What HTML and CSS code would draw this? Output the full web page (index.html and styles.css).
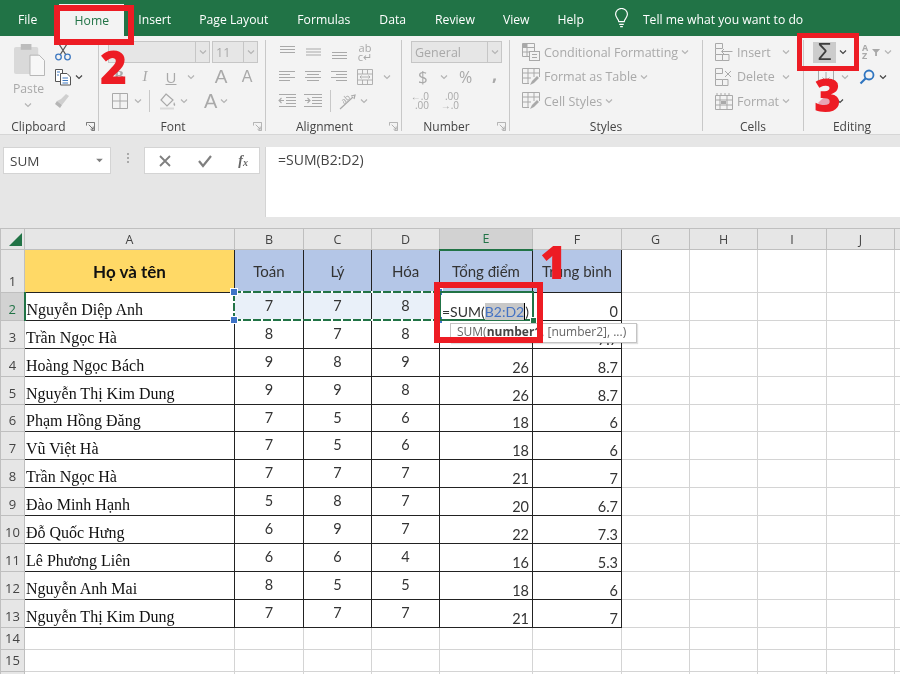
FILE: index.html
```html
<!DOCTYPE html>
<html lang="vi">
<head>
<meta charset="utf-8">
<title>Excel SUM</title>
<link rel="stylesheet" href="styles.css">
</head>
<body>
<svg class="defs" width="0" height="0">
  <symbol id="chev" viewBox="0 0 10 10"><polyline points="2,3.5 5,6.5 8,3.5" fill="none" stroke="currentColor" stroke-width="1.2"/></symbol>
  <symbol id="launch" viewBox="0 0 10 10"><path d="M.5 4V.5H9.5V9.5H6M3 3L8 8M8 5V8H5" fill="none" stroke="currentColor"/></symbol>
  <symbol id="top" viewBox="0 0 16 16"><path d="M1 2.5H16M1 5.5H16M1 8.5H16" stroke="currentColor"/></symbol>
  <symbol id="mid" viewBox="0 0 16 16"><path d="M1 5H16M1 8H16M1 11H16" stroke="currentColor"/></symbol>
  <symbol id="bot" viewBox="0 0 16 16"><path d="M1 8.5H16M1 11.5H16M1 14.5H16" stroke="currentColor"/></symbol>
  <symbol id="left" viewBox="0 0 16 16"><path d="M0 2.5H16M0 5.5H11M0 8.5H16M0 11.5H11" stroke="currentColor"/></symbol>
  <symbol id="center" viewBox="0 0 16 16"><path d="M0 2.5H16M2 5.5H14M0 8.5H16M2 11.5H14" stroke="currentColor"/></symbol>
  <symbol id="right" viewBox="0 0 16 16"><path d="M0 2.5H16M5 5.5H16M0 8.5H16M5 11.5H16" stroke="currentColor"/></symbol>
  <symbol id="outd" viewBox="0 0 18 16"><path d="M1 1.5H18M8 4.5H18M8 7.5H18M8 10.5H18M1 13.5H18M6 7.5H1M3.5 5L1 7.5L3.5 10" fill="none" stroke="currentColor" stroke-width="1.1"/></symbol>
  <symbol id="ind" viewBox="0 0 18 16"><path d="M0 1.5H18M8 4.5H18M8 7.5H18M8 10.5H18M0 13.5H18M1 7.5H6M3.5 5L6 7.5L3.5 10" fill="none" stroke="currentColor" stroke-width="1.1"/></symbol>
  <symbol id="merge" viewBox="0 0 16 16"><path d="M.5.5H15.5V15.5H.5ZM.5 5H15.5M.5 11H15.5M5.5.5V5M10.5.5V5M5.5 11V15.5M10.5 11V15.5M3 8H13M4.5 6.5L3 8L4.5 9.5M11.5 6.5L13 8L11.5 9.5" fill="none" stroke="currentColor" stroke-width=".9"/></symbol>
  <symbol id="cond" viewBox="0 0 18 18"><path d="M.5.5H12.5V13.5H.5ZM.5 4.5H12.5M.5 9H8M5 .5V13.5" fill="none" stroke="currentColor"/><rect x="7.5" y="8.5" width="10" height="9" fill="#f3f3f3" stroke="currentColor"/><path d="M10 11.5H15M10 14.5H15" stroke="currentColor"/><rect x="1" y="1" width="4" height="3" fill="currentColor"/></symbol>
  <symbol id="fmt" viewBox="0 0 18 18"><path d="M.5.5H17.5V9M.5.5V15.5H7M.5 5H17.5M.5 10H9M6 .5V15M12 .5V9" fill="none" stroke="currentColor"/><path d="M8 17L10 13L15 8L17 10L12 15Z" fill="currentColor"/></symbol>
  <symbol id="cins" viewBox="0 0 18 18"><path d="M.5.5H7.5V5.5H.5ZM.5 11.5H7.5V17.5H.5ZM7.5 11.5H14V17.5H7.5ZM.5 5.5V11.5M7 8.5H17.5M9 6L6.5 8.5L9 11" fill="none" stroke="currentColor"/></symbol>
  <symbol id="cdel" viewBox="0 0 18 18"><path d="M.5.5H7.5V5.5H.5ZM.5 5.5V11.5H7.5M.5 11.5V17.5H7.5V11.5M7.5 11.5H13V17.5H7.5M10 3L16 9M16 3L10 9" fill="none" stroke="currentColor"/></symbol>
  <symbol id="cfmt" viewBox="0 0 18 18"><path d="M.5 3.5H17.5V17.5H.5ZM.5 8H17.5M.5 13H17.5M5 3.5V17.5M12 3.5V17.5M2 1V3M6 1V3M10 1V3M14 1V3" fill="none" stroke="currentColor"/><rect x="6" y="9" width="5" height="3" fill="currentColor"/></symbol>
</svg>

<nav class="tabs">
  <span class="tab">File</span>
  <span class="tab home">Home</span>
  <span class="tab t-insert">Insert</span>
  <span class="tab t-layout">Page Layout</span>
  <span class="tab t-form">Formulas</span>
  <span class="tab t-data">Data</span>
  <span class="tab t-rev">Review</span>
  <span class="tab t-view">View</span>
  <span class="tab t-help">Help</span>
  <svg class="bulb" viewBox="0 0 16 22"><path d="M5 15C5 12 1.500 11 1.500 7A6.500 6.500 0 0 1 14.500 7C14.500 11 11 12 11 15ZM5.500 18H10.500M6.500 20.500H9.500" fill="none" stroke="#fff" stroke-width="1.300"/></svg>
  <span class="tell">Tell me what you want to do</span>
</nav>

<section class="ribbon">
  <div class="group g-clip">
    <div class="clip-body">
      <div class="paste">
        <svg class="paste-ic" viewBox="0 0 32 33"><rect x="0" y="3" width="25" height="28" rx="2" fill="#d9d9d9"/><rect x="7" y="0" width="11" height="6" fill="#bdbdbd"/><path d="M16.500 11.500H26L31.500 17V32.500H16.500Z" fill="#f7f7f7" stroke="#b5b5b5"/></svg>
        <span class="paste-t">Paste</span>
        <svg class="ch"><use href="#chev"/></svg>
      </div>
      <div class="clip-col">
        <div class="row">
          <svg class="ic18" viewBox="0 0 18 18"><path d="M5 1L12 12M13 1L6 12" stroke="#555" stroke-width="1.300"/><circle cx="4.500" cy="14" r="2.800" fill="none" stroke="#3f79c0" stroke-width="1.300"/><circle cx="13.500" cy="14" r="2.800" fill="none" stroke="#3f79c0" stroke-width="1.300"/></svg>
        </div>
        <div class="row">
          <svg class="ic18" viewBox="0 0 18 18"><path d="M1.500 1.500H8.500V13.500H1.500Z" fill="#fff" stroke="#555"/><path d="M6.500 5.500H13L16.500 9V17H6.500Z" fill="#fff" stroke="#555"/><path d="M3 4H6M3 7H5M8.500 10H14M8.500 12.500H14M8.500 15H14" stroke="#3f79c0"/></svg>
          <svg class="ch dark"><use href="#chev"/></svg>
        </div>
        <div class="row">
          <svg class="ic18" viewBox="0 0 18 18"><path d="M3 9L8 13L15 4L12 2L7 7Z" fill="#cfcfcf"/><path d="M3 9L8 13L6 16L1 12Z" fill="#b5b5b5"/></svg>
        </div>
      </div>
    </div>
    <div class="label">Clipboard</div>
    <svg class="launch dark"><use href="#launch"/></svg>
  </div>

  <div class="group g-font">
    <div class="rows">
      <div class="row">
        <div class="combo c-font"><span class="val"></span><i class="drop"><svg class="ch"><use href="#chev"/></svg></i></div>
        <div class="combo c-size"><span class="val">11</span><i class="drop"><svg class="ch"><use href="#chev"/></svg></i></div>
      </div>
      <div class="row">
        <b class="c26 gl serif">B</b>
        <i class="c26 gl serif">I</i>
        <u class="c26 gl">U</u>
        <svg class="ch"><use href="#chev"/></svg>
        <span class="c26 gl big s10">A</span>
        <span class="c26 gl mid-a">A</span>
      </div>
      <div class="row">
        <svg class="ic16 b-ic" viewBox="0 0 16 16"><path d="M.5.5H15.500V15.500H.5ZM8 .5V15.500M.5 8H15.500" fill="none" stroke="currentColor"/></svg>
        <svg class="ch"><use href="#chev"/></svg>
        <span class="vsep"></span>
        <svg class="ic18 s-fill" viewBox="0 0 18 18"><path d="M7 2L14 8L8 14L2 8Z" fill="none" stroke="currentColor" stroke-width="1.200"/><path d="M15 10C16 12 17 13 15.500 14C14 13 14.500 12 15 10Z" fill="currentColor"/><rect x="1" y="15.500" width="14" height="2" fill="#d9d9d9"/></svg>
        <svg class="ch"><use href="#chev"/></svg>
        <span class="gl big-a">A</span>
        <svg class="ch"><use href="#chev"/></svg>
      </div>
    </div>
    <div class="label">Font</div>
    <svg class="launch"><use href="#launch"/></svg>
  </div>

  <div class="group g-align">
    <div class="rows">
      <div class="row">
        <span class="c26"><svg class="ic16"><use href="#top"/></svg></span>
        <span class="c26"><svg class="ic16"><use href="#mid"/></svg></span>
        <span class="c26"><svg class="ic16"><use href="#bot"/></svg></span>
        <span class="c26 wrap">ab<br>c↵</span>
      </div>
      <div class="row">
        <span class="c26"><svg class="ic16"><use href="#left"/></svg></span>
        <span class="c26"><svg class="ic16"><use href="#center"/></svg></span>
        <span class="c26"><svg class="ic16"><use href="#right"/></svg></span>
        <span class="c26"><svg class="ic16"><use href="#merge"/></svg></span>
        <svg class="ch s3"><use href="#chev"/></svg>
      </div>
      <div class="row">
        <span class="c26"><svg class="ic18"><use href="#outd"/></svg></span>
        <span class="c26"><svg class="ic18"><use href="#ind"/></svg></span>
        <span class="vsep short"></span>
        <svg class="ic18 s-or" viewBox="0 0 18 18"><path d="M1 17L14 5M12 4L16 3L15 7" fill="none" stroke="currentColor" stroke-width="1.200"/><text x="2" y="11" class="or-t" transform="rotate(-40 5 8)">ab</text></svg>
        <svg class="ch"><use href="#chev"/></svg>
      </div>
    </div>
    <div class="label">Alignment</div>
    <svg class="launch"><use href="#launch"/></svg>
  </div>

  <div class="group g-num">
    <div class="rows">
      <div class="row">
        <div class="combo c-gen"><span class="val">General</span><i class="drop"><svg class="ch"><use href="#chev"/></svg></i></div>
      </div>
      <div class="row">
        <span class="dollar">$</span>
        <svg class="ch"><use href="#chev"/></svg>
        <span class="pct">%</span>
        <span class="comma">,</span>
      </div>
      <div class="row">
        <span class="dec">←.0<br>.00</span>
        <span class="dec d2">.00<br>→.0</span>
      </div>
    </div>
    <div class="label">Number</div>
    <svg class="launch"><use href="#launch"/></svg>
  </div>

  <div class="group g-styles">
    <div class="rows">
      <div class="row lab"><svg class="ic18"><use href="#cond"/></svg><span>Conditional Formatting</span><svg class="ch"><use href="#chev"/></svg></div>
      <div class="row lab"><svg class="ic18"><use href="#fmt"/></svg><span>Format as Table</span><svg class="ch"><use href="#chev"/></svg></div>
      <div class="row lab"><svg class="ic18"><use href="#fmt"/></svg><span>Cell Styles</span><svg class="ch"><use href="#chev"/></svg></div>
    </div>
    <div class="label">Styles</div>
  </div>

  <div class="group g-cells">
    <div class="rows">
      <div class="row lab"><svg class="ic18"><use href="#cins"/></svg><span class="cw">Insert</span><svg class="ch"><use href="#chev"/></svg></div>
      <div class="row lab"><svg class="ic18"><use href="#cdel"/></svg><span class="cw">Delete</span><svg class="ch"><use href="#chev"/></svg></div>
      <div class="row lab"><svg class="ic18"><use href="#cfmt"/></svg><span class="cw">Format</span><svg class="ch"><use href="#chev"/></svg></div>
    </div>
    <div class="label">Cells</div>
  </div>

  <div class="group g-edit">
    <div class="rows">
      <div class="row">
        <span class="sigma">Σ</span>
        <svg class="ch dark"><use href="#chev"/></svg>
        <span class="sort">A<br>Z</span>
        <svg class="ic10" viewBox="0 0 10 10"><path d="M0 1H9L5.500 5V9H3.500V5Z" fill="#a8a8a8"/></svg>
        <svg class="ch"><use href="#chev"/></svg>
      </div>
      <div class="row">
        <svg class="ic16 e-fill" viewBox="0 0 16 16"><path d="M.5.5H15.500V15.500H.5ZM8 3V12M4.500 8.500L8 12L11.500 8.500" fill="none" stroke="#a8a8a8"/></svg>
        <svg class="ch"><use href="#chev"/></svg>
        <svg class="ic16 e-find" viewBox="0 0 16 16"><circle cx="10" cy="6" r="4.500" fill="none" stroke="#2f75c0" stroke-width="1.800"/><path d="M7 9L1.500 14.500" stroke="#2f75c0" stroke-width="2.200"/></svg>
        <svg class="ch dark"><use href="#chev"/></svg>
      </div>
      <div class="row">
        <svg class="ic16 e-clear" viewBox="0 0 16 16"><path d="M1 10L8 3L14 8L9 14H4Z" fill="#e7a6b4"/></svg>
        <svg class="ch dark"><use href="#chev"/></svg>
      </div>
    </div>
    <div class="label">Editing</div>
  </div>
</section>

<section class="fbar">
  <div class="namebox"><span>SUM</span><svg class="caret" viewBox="0 0 10 6"><path d="M1 1H9L5 5Z" fill="#7f7f7f"/></svg></div>
  <div class="grip"><i></i><i></i><i></i></div>
  <div class="fbtns">
    <svg class="ic14" viewBox="0 0 14 14"><path d="M2 2L12 12M12 2L2 12" stroke="#7f7f7f" stroke-width="1.800"/></svg>
    <svg class="ic14" viewBox="0 0 14 14"><path d="M1 7L5 12L13 2" fill="none" stroke="#7f7f7f" stroke-width="2.200"/></svg>
    <span class="fx">f<sub>x</sub></span>
  </div>
  <div class="finput">=SUM(B2:D2)</div>
</section>

<section class="sheet">
  <table class="grid">
    <colgroup>
      <col class="w-h"><col class="w-a"><col class="w-b"><col class="w-c"><col class="w-c"><col class="w-e"><col class="w-f"><col class="w-c"><col class="w-c"><col class="w-b"><col class="w-c"><col class="w-k">
    </colgroup>
    <tr class="r-head">
      <th class="corner"><svg class="tri" viewBox="0 0 13 13"><path d="M13 0V13H0Z" fill="#217346"/></svg></th>
      <th>A</th><th>B</th><th>C</th><th>D</th><th class="sel-col">E</th><th>F</th><th>G</th><th>H</th><th>I</th><th>J</th><th></th>
    </tr>
    <tr class="r-1">
      <th class="rn">1</th>
      <td class="name-h x">Họ và tên</td><td class="sub x">Toán</td><td class="sub x">Lý</td><td class="sub x">Hóa</td><td class="sub x">Tổng điểm</td><td class="sub x">Trung bình</td><td></td><td></td><td></td><td></td><td></td>
    </tr>
    <tr class="r-d">
      <th class="rn sel-row">2</th>
      <td class="nm x">Nguyễn Diệp Anh</td><td class="v x rng">7</td><td class="v x rng">7</td><td class="v x rng">8</td><td class="t x f2">=SUM(<span class="hl">B2:D2</span><span class="cur">)</span></td><td class="t x">0</td><td></td><td></td><td></td><td></td><td></td>
    </tr>
    <tr class="r-d"><th class="rn">3</th><td class="nm x">Trần Ngọc Hà</td><td class="v x">8</td><td class="v x">7</td><td class="v x">8</td><td class="t x"></td><td class="t x">7.7</td><td></td><td></td><td></td><td></td><td></td></tr>
    <tr class="r-d"><th class="rn">4</th><td class="nm x">Hoàng Ngọc Bách</td><td class="v x">9</td><td class="v x">8</td><td class="v x">9</td><td class="t x">26</td><td class="t x">8.7</td><td></td><td></td><td></td><td></td><td></td></tr>
    <tr class="r-d"><th class="rn">5</th><td class="nm x">Nguyễn Thị Kim Dung</td><td class="v x">9</td><td class="v x">9</td><td class="v x">8</td><td class="t x">26</td><td class="t x">8.7</td><td></td><td></td><td></td><td></td><td></td></tr>
    <tr class="r-d"><th class="rn">6</th><td class="nm x">Phạm Hồng Đăng</td><td class="v x">7</td><td class="v x">5</td><td class="v x">6</td><td class="t x">18</td><td class="t x">6</td><td></td><td></td><td></td><td></td><td></td></tr>
    <tr class="r-d"><th class="rn">7</th><td class="nm x">Vũ Việt Hà</td><td class="v x">7</td><td class="v x">5</td><td class="v x">6</td><td class="t x">18</td><td class="t x">6</td><td></td><td></td><td></td><td></td><td></td></tr>
    <tr class="r-d"><th class="rn">8</th><td class="nm x">Trần Ngọc Hà</td><td class="v x">7</td><td class="v x">7</td><td class="v x">7</td><td class="t x">21</td><td class="t x">7</td><td></td><td></td><td></td><td></td><td></td></tr>
    <tr class="r-d"><th class="rn">9</th><td class="nm x">Đào Minh Hạnh</td><td class="v x">5</td><td class="v x">8</td><td class="v x">7</td><td class="t x">20</td><td class="t x">6.7</td><td></td><td></td><td></td><td></td><td></td></tr>
    <tr class="r-d"><th class="rn">10</th><td class="nm x">Đỗ Quốc Hưng</td><td class="v x">6</td><td class="v x">9</td><td class="v x">7</td><td class="t x">22</td><td class="t x">7.3</td><td></td><td></td><td></td><td></td><td></td></tr>
    <tr class="r-d"><th class="rn">11</th><td class="nm x">Lê Phương Liên</td><td class="v x">6</td><td class="v x">6</td><td class="v x">4</td><td class="t x">16</td><td class="t x">5.3</td><td></td><td></td><td></td><td></td><td></td></tr>
    <tr class="r-d"><th class="rn">12</th><td class="nm x">Nguyễn Anh Mai</td><td class="v x">8</td><td class="v x">5</td><td class="v x">5</td><td class="t x">18</td><td class="t x">6</td><td></td><td></td><td></td><td></td><td></td></tr>
    <tr class="r-d"><th class="rn">13</th><td class="nm x">Nguyễn Thị Kim Dung</td><td class="v x">7</td><td class="v x">7</td><td class="v x">7</td><td class="t x">21</td><td class="t x">7</td><td></td><td></td><td></td><td></td><td></td></tr>
    <tr class="r-e"><th class="rn">14</th><td></td><td></td><td></td><td></td><td></td><td></td><td></td><td></td><td></td><td></td><td></td></tr>
    <tr class="r-e"><th class="rn">15</th><td></td><td></td><td></td><td></td><td></td><td></td><td></td><td></td><td></td><td></td><td></td></tr>
    <tr class="r-e"><th class="rn"></th><td></td><td></td><td></td><td></td><td></td><td></td><td></td><td></td><td></td><td></td><td></td></tr>
  </table>
</section>

<div class="ants"></div>
<i class="hnd h1"></i><i class="hnd h2"></i><i class="hnd h3"></i><i class="hnd h4"></i>
<div class="active"></div>
<i class="fill-h"></i>
<div class="tip">SUM(<b>number1</b>, [number2], ...)</div>

<div class="mark m-home"></div>
<div class="mark m-sum"></div>
<div class="mark m-cell"></div>
<span class="num n1">1</span>
<span class="num n2">2</span>
<span class="num n3">3</span>
</body>
</html>
```

FILE: styles.css
```css
* { box-sizing: border-box; }
html, body { margin: 0; height: 100%; }
body {
  position: relative;
  width: 900px;
  height: 674px;
  overflow: hidden;
  background: #fff;
  font-family: "Open Sans", "Noto Sans", sans-serif;
  color: #444;
  filter: blur(.4px);
}
.defs { position: absolute; }

/* Tabs */
.tabs {
  height: 36px;
  background: #217346;
  display: flex;
  align-items: center;
  color: #fff;
  font-size: 12.2px;
  padding-left: 18px;
}
.tab { flex: none; position: relative; top: 1px; }
.home {
  margin-left: 22px;
  background: #f3f3f3;
  color: #217346;
  align-self: stretch;
  width: 65px;
  margin-top: 4px;
  margin-bottom: -1px;
  top: 0;
  display: flex;
  align-items: center;
  justify-content: center;
}
.t-insert { margin-left: 14px; }
.t-layout { margin-left: 28px; }
.t-form { margin-left: 29px; }
.t-data { margin-left: 29px; }
.t-rev { margin-left: 29px; }
.t-view { margin-left: 28px; }
.t-help { margin-left: 28px; }
.bulb { width: 15px; height: 20px; margin-left: 30px; flex: none; }
.tell { margin-left: 14px; flex: none; position: relative; top: 1px; }

/* Ribbon */
.ribbon {
  height: 99px;
  background: #f3f3f3;
  display: flex;
  align-items: flex-start;
  padding-top: 4px;
  color: #a9a9a9;
  border-bottom: 1px solid #d6d6d6;
}
.group {
  position: relative;
  height: 91px;
  border-right: 1px solid #c8c8c8;
  flex: none;
}
.g-clip { width: 99px; }
.g-font { width: 167px; padding-left: 7px; }
.g-align { width: 136px; padding-left: 8px; }
.g-num { width: 108px; padding-left: 9px; }
.g-styles { width: 193px; padding-left: 12px; }
.g-cells { width: 101px; padding-left: 12px; }
.g-edit { width: 96px; border-right: 0; padding-left: 9px; }
.rows, .clip-col { display: grid; grid-template-rows: repeat(3, 24.5px); }
.row { display: flex; align-items: center; }
.label {
  position: absolute;
  left: 0; right: 0; top: 79px;
  height: 16px;
  line-height: 16px;
  text-align: center;
  font-size: 12px;
  color: #444;
}
.launch {
  position: absolute;
  right: 3px; top: 82px;
  width: 9px; height: 9px;
  color: #a9a9a9;
}
.launch.dark { color: #666; }
.g-clip .label { right: 21px; }
.g-font .label, .g-align .label, .g-num .label { right: 18px; }
.ch { width: 10px; height: 10px; flex: none; color: #b4b4b4; margin: 0 2px; }
.ch.dark { color: #444; }
.ic10 { width: 9px; height: 9px; flex: none; }
.ic14 { width: 14px; height: 14px; flex: none; }
.ic16 { width: 16px; height: 16px; flex: none; }
.ic18 { width: 18px; height: 18px; flex: none; }
.c26 {
  width: 26px; height: 24px; flex: none;
  display: flex; align-items: center; justify-content: center;
}
.vsep { width: 1px; height: 22px; background: #c8c8c8; flex: none; margin-left: 4px; }

/* Clipboard */
.clip-body { display: flex; }
.paste {
  width: 55px;
  padding-left: 13px;
  display: flex;
  flex-direction: column;
}
.paste-ic { width: 31px; height: 32px; margin-top: 4px; margin-left: 1px; }
.paste-t { font-size: 12.2px; line-height: 16px; margin-top: 5px; width: 32px; }
.paste .ch { margin: 3px 0 0 10px; }
.clip-col { margin-left: -1px; }

/* Font */
.combo {
  display: flex;
  height: 22px;
  border: 1px solid #c6c6c6;
  background: #e6e6e6;
  flex: none;
  font-size: 12.5px;
  color: #a9a9a9;
  align-items: center;
}
.combo .val { flex: 1; padding-left: 3px; white-space: nowrap; }
.drop {
  width: 14px; height: 100%;
  border-left: 1px solid #c6c6c6;
  display: flex; align-items: center; justify-content: center;
  flex: none;
}
.drop .ch { margin: 0; }
.c-font { width: 102px; margin-left: 2px; }
.c-size { width: 46px; margin-left: 2px; }
.gl { font-size: 15px; color: #a9a9a9; }
.serif { font-family: "Liberation Serif", serif; }
.big { font-size: 19px; font-family: "Liberation Sans", sans-serif; }
.mid-a { font-size: 16px; font-family: "Liberation Sans", sans-serif; }
.s10 { margin-left: 10px; }
.b-ic { margin-left: 6px; color: #a9a9a9; }
.b-ic + .ch { margin-left: 5px; }
.s-fill { margin-left: 9px; color: #a9a9a9; }
.big-a { font-size: 20px; margin-left: 13px; font-family: "Liberation Sans", sans-serif; }
.s3 { margin-left: 4px; }

/* Alignment */
.g-align .c26 { color: #a9a9a9; }
.wrap { font-size: 11px; line-height: 9px; text-align: center; display: block; padding-top: 3px; }
.short { margin: 0 0 0 4px; }
.s-or { margin-left: 8px; color: #a9a9a9; overflow: visible; }
.or-t { font-size: 8px; fill: #a9a9a9; font-family: "Open Sans", sans-serif; }

/* Number */
.c-gen { width: 91px; font-size: 12.5px; }
.dollar { font-size: 17px; margin-left: 7px; width: 19px; }
.pct { font-size: 16px; margin-left: 8px; width: 22px; }
.comma { font-size: 18px; font-weight: 700; margin-left: 11px; position: relative; top: -3px; }
.dec { font-size: 10px; line-height: 9px; margin-left: -3px; text-align: right; width: 21px; }
.d2 { margin-left: 9px; }

/* Styles / Cells */
.lab { font-size: 12.5px; white-space: nowrap; }
.lab .ic18 { margin-right: 4px; color: #a9a9a9; }
.cw { width: 42px; }

/* Editing */
.sigma {
  width: 23px; height: 21px;
  background: #ccc;
  color: #3d3d3d;
  font-size: 23px;
  line-height: 21px;
  text-align: center;
  font-family: "Liberation Sans", sans-serif;
  flex: none;
}
.sort { font-size: 9px; line-height: 8px; margin-left: 12px; font-weight: 700; width: 10px; }
.e-fill { margin-left: 5px; }
.e-fill + .ch { margin-left: 6px; }
.e-find { margin-left: 7px; }
.e-find + .ch { margin-left: 3px; }
.e-clear { margin-left: 4px; }

/* Formula bar */
.fbar {
  height: 93px;
  background: #e6e6e6;
  display: flex;
  align-items: flex-start;
  padding-top: 12px;
}
.namebox {
  width: 108px; height: 27px;
  margin-left: 3px;
  background: #fff;
  border: 1px solid #d4d4d4;
  display: flex; align-items: center; justify-content: space-between;
  padding: 0 6px;
  font-size: 13.5px;
  color: #444;
}
.caret { width: 9px; height: 5px; }
.grip { width: 33px; padding-top: 6px; display: flex; flex-direction: column; align-items: center; gap: 2px; }
.grip i { width: 2px; height: 2px; background: #aaa; }
.fbtns {
  width: 116px; height: 27px;
  background: #fff;
  border: 1px solid #d4d4d4;
  display: flex; align-items: center; justify-content: space-between;
  padding: 0 11px 0 13px;
}
.fx { font-family: "Liberation Serif", serif; font-style: italic; font-size: 14px; font-weight: 700; color: #666; }
.fx sub { font-size: 10px; vertical-align: -1px; }
.finput {
  flex: 1;
  height: 70px;
  margin-left: 5px;
  background: #fff;
  border-left: 1px solid #d4d4d4;
  padding: 1px 0 0 12px;
  font-size: 14px;
  line-height: 24px;
  color: #444;
}

/* Sheet */
.sheet { height: 446px; overflow: hidden; background: #fff; }
.grid {
  border-collapse: collapse;
  table-layout: fixed;
  width: 900px;
  font-family: Lato, "Open Sans", sans-serif;
  font-size: 14.5px;
  color: #333;
}
.w-h { width: 24px; } .w-a { width: 210px; } .w-b { width: 69px; } .w-c { width: 68px; }
.w-e { width: 93px; } .w-f { width: 89px; } .w-k { width: 6px; }
.grid th {
  background: #e6e6e6;
  font-weight: 400;
  font-family: "Open Sans", sans-serif;
  font-size: 12.5px;
  color: #444;
  padding: 0;
  border: 1px solid #bfbfbf;
  overflow: hidden;
}
.grid td {
  border: 1px solid #d4d4d4;
  padding: 0 3px;
  white-space: nowrap;
  overflow: hidden;
}
.r-head { height: 21px; }
.r-1 { height: 43px; }
.r-d { height: 27.9px; }
.r-e { height: 21px; }
.corner { position: relative; }
.tri { position: absolute; left: 8px; bottom: 3px; width: 13px; height: 13px; }
.grid .rn { vertical-align: bottom; line-height: 21px; font-size: 13px; }
.grid .sel-col { background: #d2d2d2; color: #217346; border-bottom: 2px solid #217346; }
.grid .sel-row { background: #d2d2d2; color: #217346; border-right: 2px solid #217346; }
.grid td.x { border: 1.5px solid #222; }
.grid td.name-h { background: #ffd966; font-weight: 700; text-align: center; font-size: 17px; color: #111; }
.sub { background: #b4c6e7; text-align: center; font-size: 15px; }
.grid td.nm { font-family: "Liberation Serif", serif; font-size: 16px; vertical-align: bottom; color: #111; line-height: 19px; padding: 0 0 1px 1px; }
.grid td.v { text-align: center; vertical-align: middle; padding-bottom: 2px; }
.t { text-align: right; vertical-align: bottom; }
.rng { background: #e9f0f9; }
.grid td.f2 { padding-left: 2px; text-align: left; font-size: 14px; position: relative; z-index: 1; }
.hl { background: #c8c8c8; color: #4472c4; }
.cur { border-left: 1px solid #000; }

/* Overlays */
.ants {
  position: absolute;
  left: 233px; top: 291px;
  width: 207px; height: 30px;
  background:
    repeating-linear-gradient(90deg, #217346 0 8px, #fff 8px 10px) left top / 100% 2px no-repeat,
    repeating-linear-gradient(90deg, #217346 0 8px, #fff 8px 10px) left bottom / 100% 2px no-repeat,
    repeating-linear-gradient(0deg, #217346 0 8px, #fff 8px 10px) left top / 2px 100% no-repeat,
    repeating-linear-gradient(0deg, #217346 0 8px, #fff 8px 10px) right top / 2px 100% no-repeat;
}
.hnd { position: absolute; width: 8px; height: 8px; background: #3f74c8; border: 1px solid #fff; }
.h1 { left: 230px; top: 288px; }
.h2 { left: 230px; top: 316px; }
.h3 { left: 435px; top: 288px; }
.h4 { left: 435px; top: 316px; }
.active { position: absolute; left: 439px; top: 291px; width: 95px; height: 30px; border: 2px solid #217346; }
.fill-h { position: absolute; left: 530px; top: 317px; width: 7px; height: 7px; background: #217346; border: 1px solid #fff; }
.tip {
  position: absolute;
  left: 450px; top: 323px;
  width: 187px; height: 20px;
  background: #fff;
  border: 1px solid #c4c4c4;
  box-shadow: 1px 1px 1px rgba(0,0,0,.12);
  font-size: 12px;
  line-height: 15px;
  padding-left: 6px;
  color: #666;
  white-space: nowrap;
}
.tip b { color: #444; }
.mark { position: absolute; border: 5px solid #ed1c24; }
.m-home { left: 54px; top: 5px; width: 80px; height: 40px; border-width: 6px; }
.m-sum { left: 797px; top: 33px; width: 62px; height: 38px; }
.m-cell { left: 434px; top: 282px; width: 109px; height: 61px; border-width: 6px; }
.num {
  position: absolute;
  color: #ed1c24;
  font-weight: 800;
  font-size: 46px;
  line-height: 46px;
  font-family: "Open Sans", sans-serif;
}
.n1 { left: 540px; top: 238px; }
.n2 { left: 100px; top: 43px; }
.n3 { left: 814px; top: 71px; }
```
